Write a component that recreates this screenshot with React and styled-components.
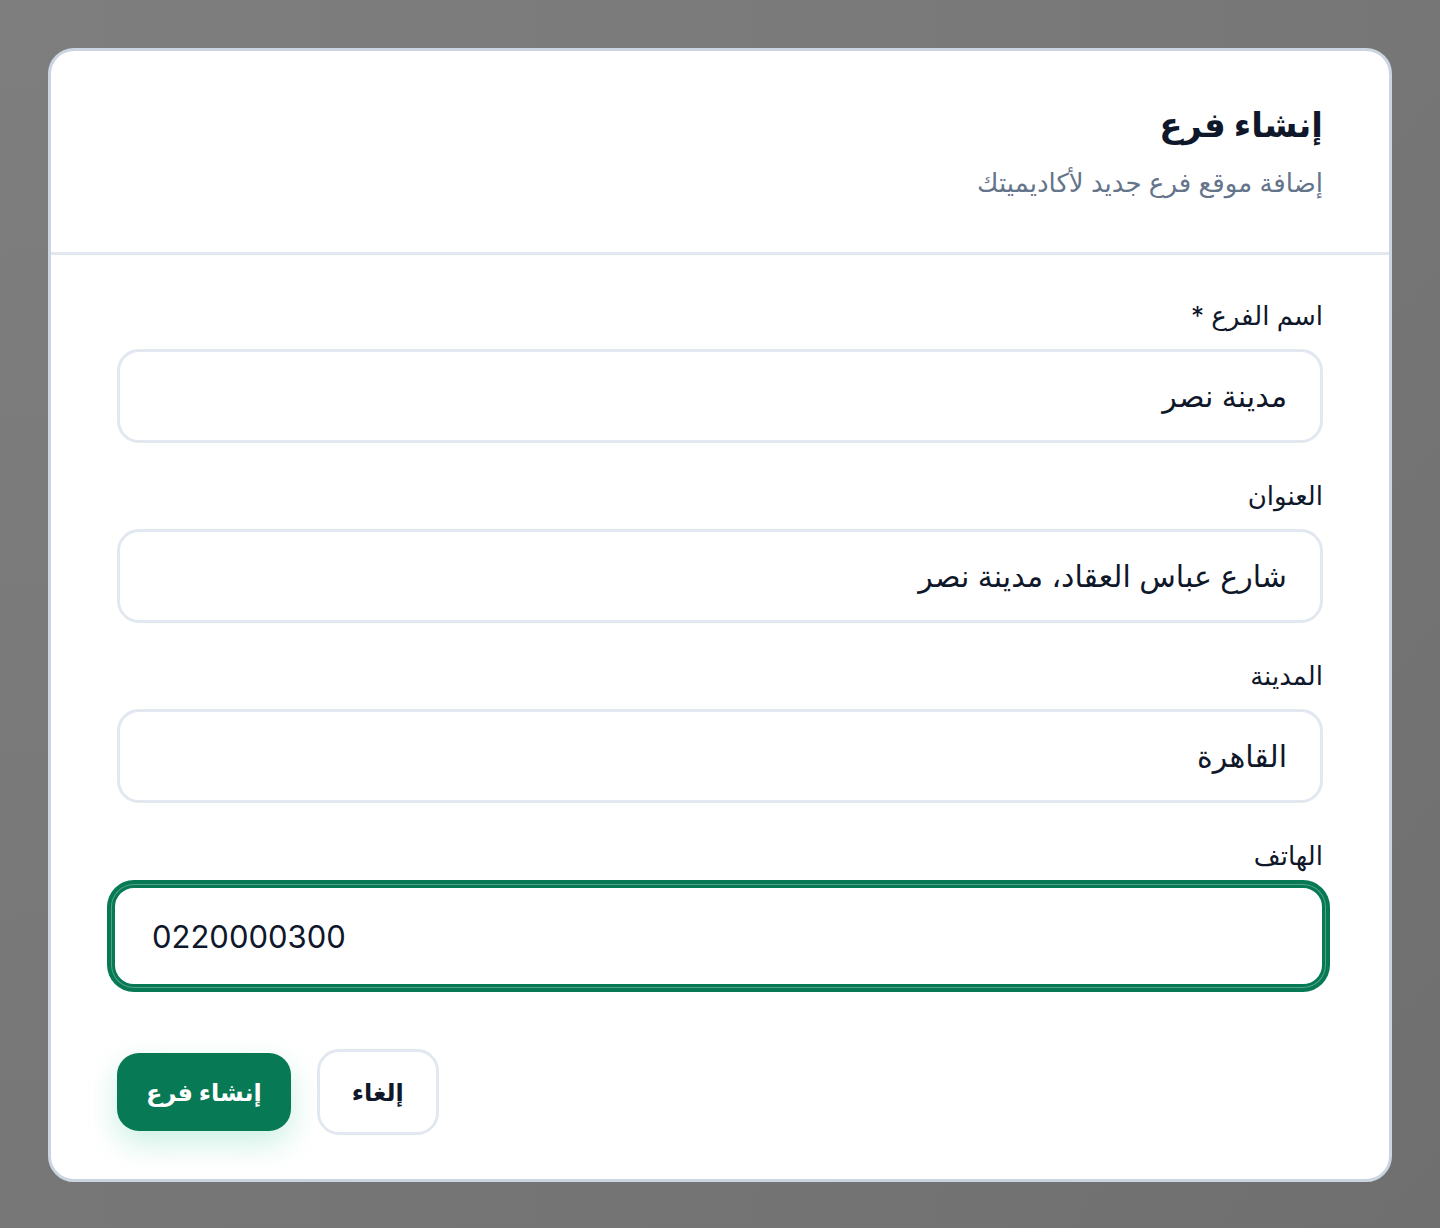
import React from 'react';
import styled, { createGlobalStyle } from 'styled-components';

const fields = [
  { label: 'اسم الفرع *', value: 'مدينة نصر' },
  { label: 'العنوان', value: 'شارع عباس العقاد، مدينة نصر' },
  { label: 'المدينة', value: 'القاهرة' },
  { label: 'الهاتف', value: '0220000300', ltr: true, focused: true },
];

const App = () => {
  return (
    <Backdrop>
      <GlobalStyle />
      <Modal dir="rtl">
        <Header>
          <Title>إنشاء فرع</Title>
          <Subtitle>إضافة موقع فرع جديد لأكاديميتك</Subtitle>
        </Header>
        <Body>
          {fields.map((f) => (
            <Field key={f.label}>
              <Label>{f.label}</Label>
              <Input
                defaultValue={f.value}
                dir={f.ltr ? 'ltr' : 'rtl'}
                $focused={f.focused}
                $ltr={f.ltr}
              />
            </Field>
          ))}
          <Footer>
            <Button>إلغاء</Button>
            <Button $primary>إنشاء فرع</Button>
          </Footer>
        </Body>
      </Modal>
    </Backdrop>
  );
};

export default App;

const GlobalStyle = createGlobalStyle`
  * { box-sizing: border-box; }
  body {
    margin: 0;
    font-family: Inter, "DejaVu Sans", "Noto Sans", sans-serif;
    background: #777;
  }
`;

const Backdrop = styled.div`
  min-height: 1228px;
  padding: 48px;
  background:
    linear-gradient(180deg, rgba(255,255,255,0) 0%, rgba(0,0,0,0.06) 100%),
    linear-gradient(90deg, #7e7e7e 0%, #7a7a7a 60%, #767676 100%);
`;

const Modal = styled.div`
  width: 1344px;
  background: #ffffff;
  border: 3px solid #cbd5e1;
  border-radius: 26px;
  overflow: hidden;
`;

const Header = styled.div`
  padding: 51px 66px 53px;
  border-bottom: 3px solid #e2e8f0;
  display: flex;
  flex-direction: column;
  gap: 19px;
`;

const Title = styled.h2`
  margin: 0;
  font-size: 34px;
  line-height: 46px;
  font-weight: 700;
  color: #0f172a;
`;

const Subtitle = styled.p`
  margin: 0;
  font-size: 26px;
  line-height: 32px;
  color: #64748b;
`;

const Body = styled.div`
  padding: 45px 66px 44px;
  display: flex;
  flex-direction: column;
  gap: 37px;
`;

const Field = styled.div`
  display: flex;
  flex-direction: column;
  gap: 17px;
`;

const Label = styled.label`
  font-size: 26px;
  line-height: 32px;
  color: #0f172a;
`;

const Input = styled.input`
  height: ${(p) => (p.$focused ? '102px' : '94px')};
  margin: ${(p) => (p.$focused ? '-4px -2px -4px -5px' : '0')};
  width: ${(p) => (p.$focused ? 'calc(100% + 7px)' : '100%')};
  padding: ${(p) => (p.$ltr ? '0 33px 0 37px' : '0 33px')};
  border: 3px solid ${(p) => (p.$focused ? '#077a55' : '#e2e8f0')};
  border-radius: 22px;
  background: #fff;
  font-family: inherit;
  font-size: ${(p) => (p.$ltr ? '31px' : '30px')};
  color: #0f172a;
  text-align: ${(p) => (p.$ltr ? 'left' : 'right')};
  outline: none;
  box-shadow: ${(p) =>
    p.$focused ? '0 0 0 1px rgba(255,255,255,0.3), 0 0 0 5px #077a55' : 'none'};
`;

const Footer = styled.div`
  display: flex;
  justify-content: flex-end;
  align-items: center;
  gap: 26px;
  margin-top: 29px;
`;

const Button = styled.button`
  font-family: inherit;
  font-size: 24px;
  font-weight: 700;
  border-radius: 22px;
  cursor: pointer;
  height: ${(p) => (p.$primary ? '78px' : '86px')};
  padding: ${(p) => (p.$primary ? '0 29px' : '0 32px')};
  color: ${(p) => (p.$primary ? '#ffffff' : '#0f172a')};
  background: ${(p) => (p.$primary ? '#077a55' : '#ffffff')};
  border: ${(p) => (p.$primary ? 'none' : '3px solid #e2e8f0')};
  box-shadow: ${(p) =>
    p.$primary ? '0 12px 30px rgba(16, 185, 129, 0.22)' : 'none'};
`;
